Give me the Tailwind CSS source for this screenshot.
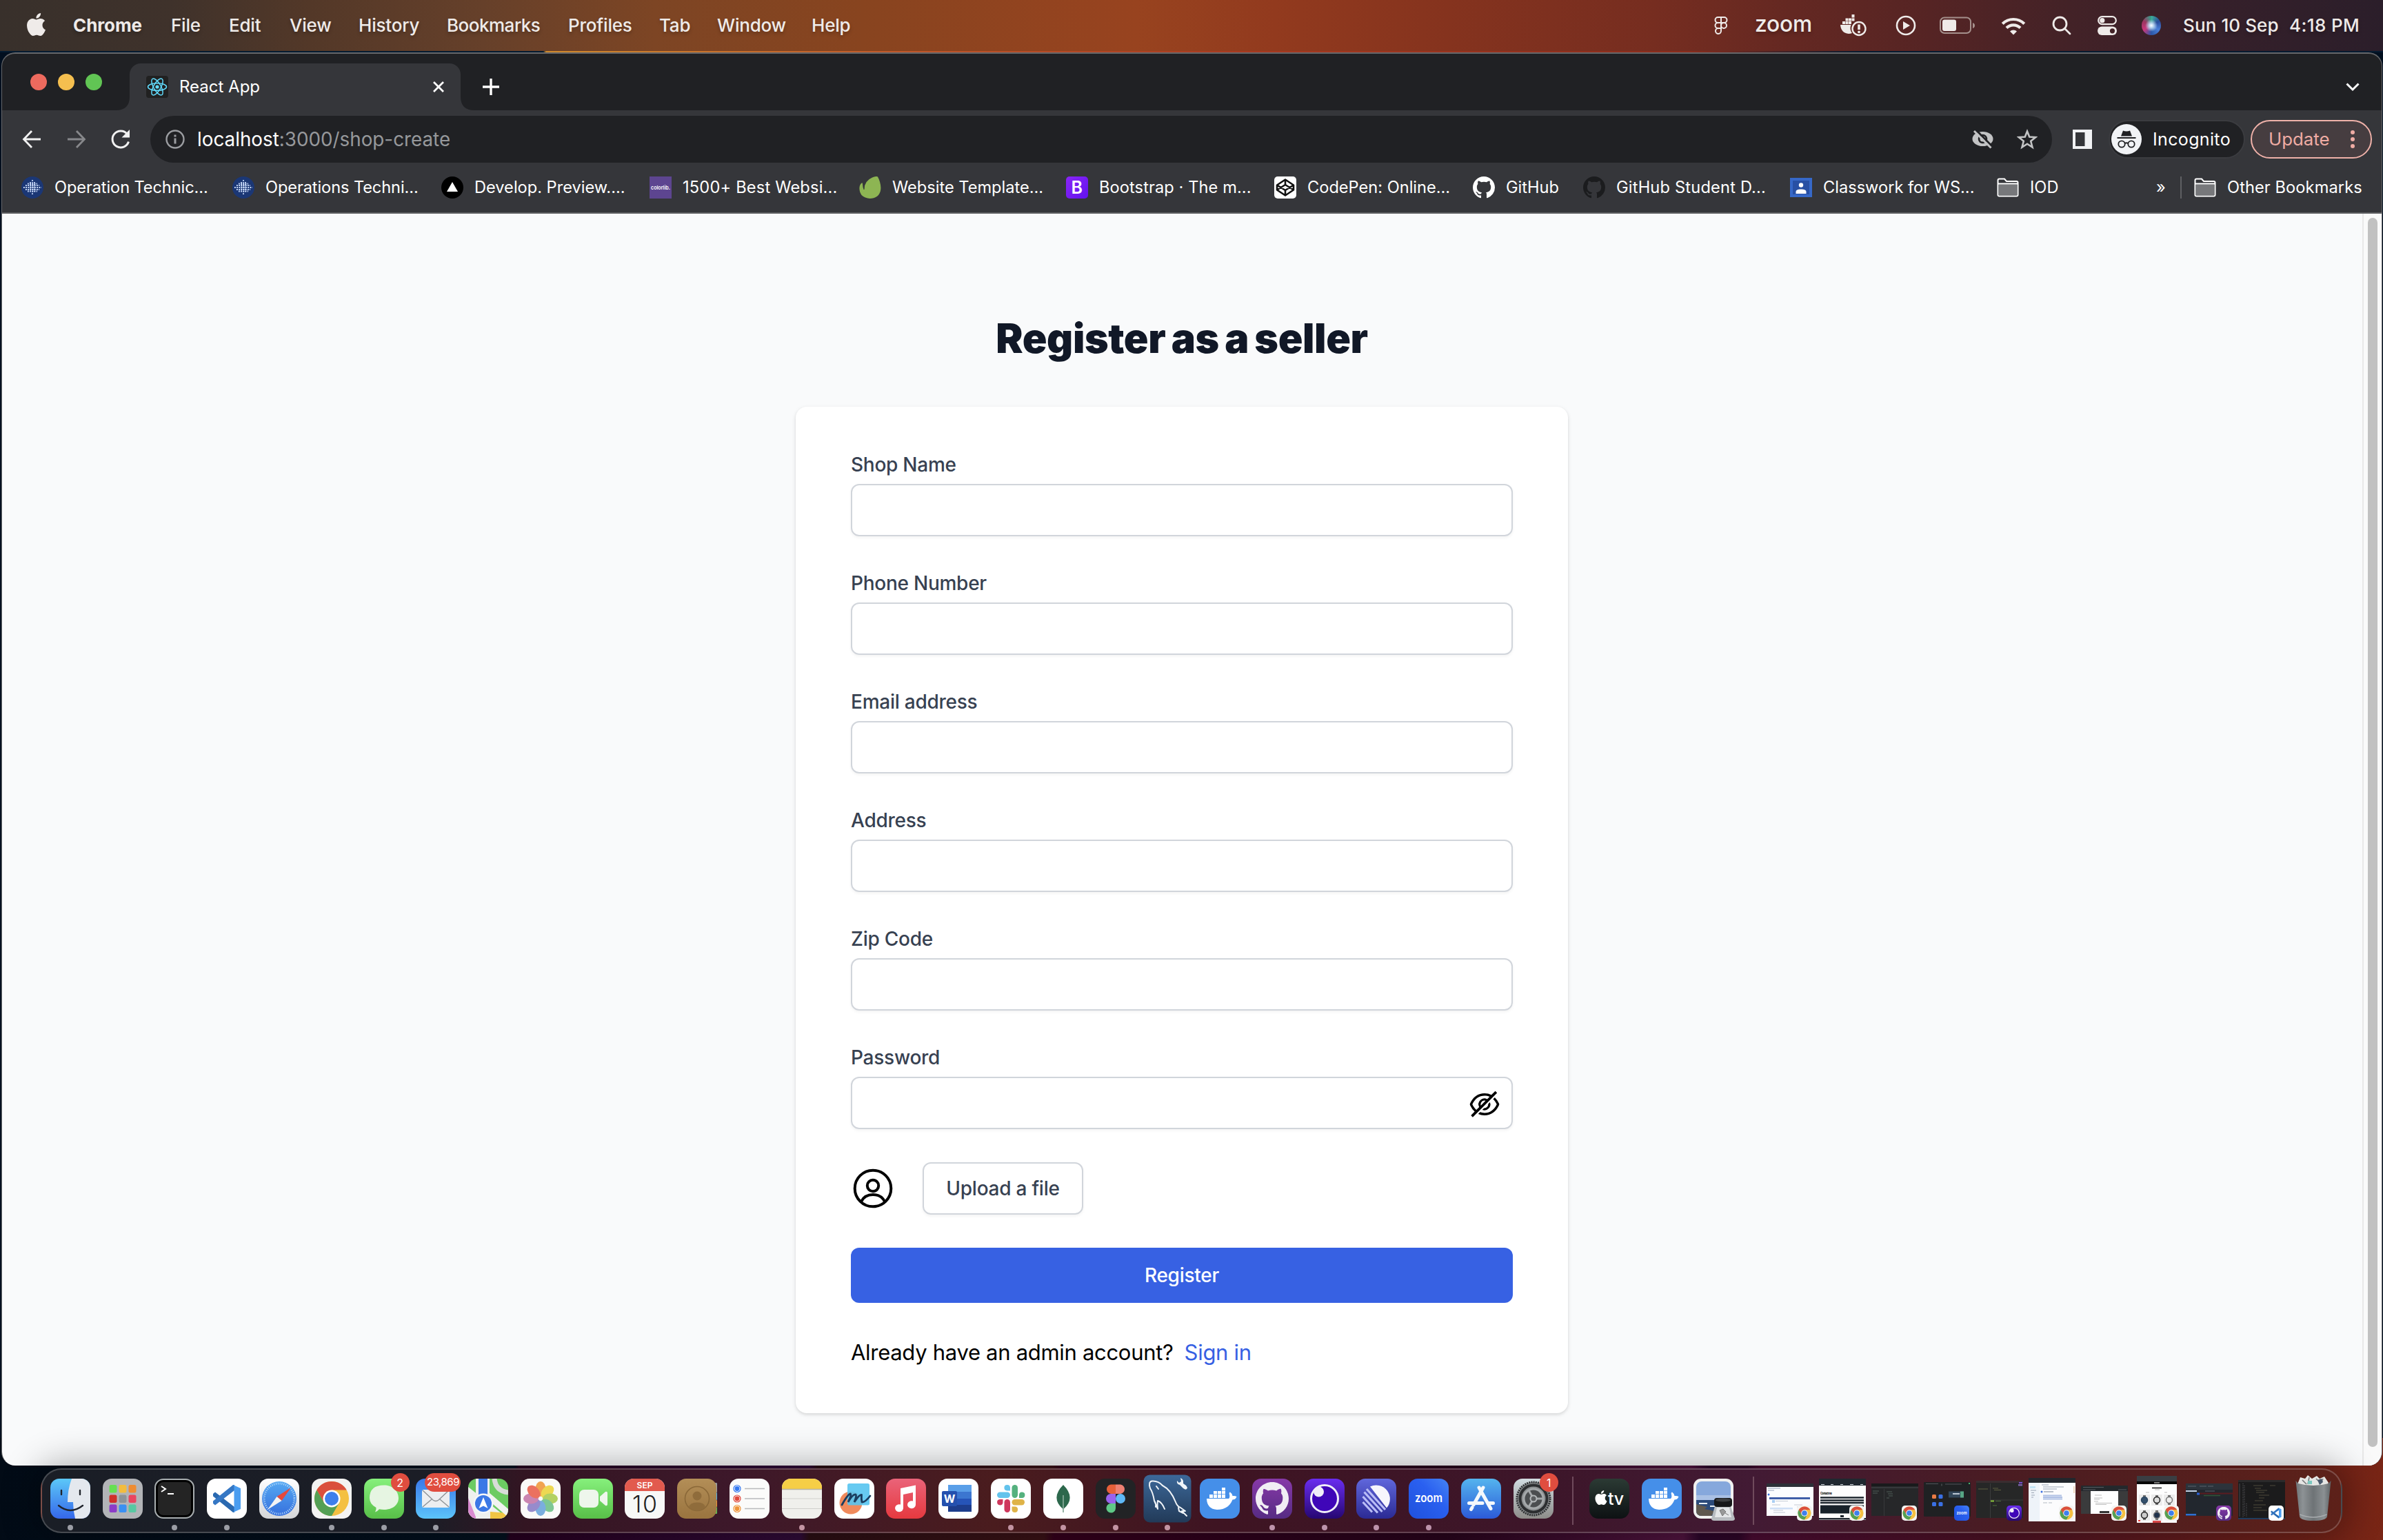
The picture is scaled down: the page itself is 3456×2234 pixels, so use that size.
<!DOCTYPE html>
<html lang="en">
<head>
<meta charset="utf-8">
<title>React App</title>
<script src="https://cdn.jsdelivr.net/npm/@tailwindcss/browser@4"></script>
</head>
<body class="w-[3456px] h-[2234px] overflow-hidden bg-[#020f1f] font-[Inter,sans-serif] flex flex-col">

<!-- Shared icon symbols -->
<svg width="0" height="0" class="absolute">
  <defs>
    <linearGradient id="gGreen" x1="0" y1="0" x2="0" y2="1"><stop offset="0" stop-color="#86f07c"/><stop offset="1" stop-color="#58bf48"/></linearGradient>
    <linearGradient id="gMail" x1="0" y1="0" x2="0" y2="1"><stop offset="0" stop-color="#3a78ea"/><stop offset="1" stop-color="#5cc4fa"/></linearGradient>
    <linearGradient id="gFind" x1="0" y1="0" x2="0" y2="1"><stop offset="0" stop-color="#5cc8f8"/><stop offset="1" stop-color="#3567ea"/></linearGradient>
    <linearGradient id="gWhite" x1="0" y1="0" x2="0" y2="1"><stop offset="0" stop-color="#ffffff"/><stop offset="1" stop-color="#d4d6d8"/></linearGradient>
    <linearGradient id="gSaf" x1="0" y1="0" x2="0" y2="1"><stop offset="0" stop-color="#55a8f2"/><stop offset="1" stop-color="#3670dd"/></linearGradient>
    <linearGradient id="gMusic" x1="0" y1="0" x2="0" y2="1"><stop offset="0" stop-color="#ea6379"/><stop offset="1" stop-color="#e6393f"/></linearGradient>
    <linearGradient id="gContact" x1="0" y1="0" x2="0" y2="1"><stop offset="0" stop-color="#b38e57"/><stop offset="1" stop-color="#9a743f"/></linearGradient>
    <linearGradient id="gSql" x1="0" y1="0" x2="0" y2="1"><stop offset="0" stop-color="#3c6899"/><stop offset="1" stop-color="#223a58"/></linearGradient>
    <linearGradient id="gGit" x1="0" y1="0" x2="0" y2="1"><stop offset="0" stop-color="#8739a8"/><stop offset="1" stop-color="#562b83"/></linearGradient>
    <linearGradient id="gIns" x1="0" y1="0" x2="0" y2="1"><stop offset="0" stop-color="#6a2df0"/><stop offset="1" stop-color="#260772"/></linearGradient>
    <linearGradient id="gLin" x1="0" y1="0" x2="0" y2="1"><stop offset="0" stop-color="#6067dc"/><stop offset="1" stop-color="#2b2a94"/></linearGradient>
    <linearGradient id="gZoom" x1="0" y1="1" x2="1" y2="0"><stop offset="0" stop-color="#1f51dc"/><stop offset=".6" stop-color="#2a60f0"/><stop offset="1" stop-color="#4583f4"/></linearGradient>
    <linearGradient id="gStore" x1="0" y1="0" x2="0" y2="1"><stop offset="0" stop-color="#54b4ee"/><stop offset="1" stop-color="#2c5ad8"/></linearGradient>
    <linearGradient id="gSet" x1="0" y1="0" x2="0" y2="1"><stop offset="0" stop-color="#d2dde2"/><stop offset="1" stop-color="#8d8c89"/></linearGradient>
    <linearGradient id="gTv" x1="0" y1="0" x2="0" y2="1"><stop offset="0" stop-color="#2b3a34"/><stop offset="1" stop-color="#0d1113"/></linearGradient>
    <linearGradient id="gTrash" x1="0" y1="0" x2="1" y2="0"><stop offset="0" stop-color="#6d7275"/><stop offset=".2" stop-color="#8d9295"/><stop offset=".5" stop-color="#6e7376"/><stop offset=".8" stop-color="#8b9093"/><stop offset="1" stop-color="#5d6265"/></linearGradient>
    <linearGradient id="gBoot" x1="0" y1="0" x2="1" y2="1"><stop offset="0" stop-color="#8a25f5"/><stop offset="1" stop-color="#6212f0"/></linearGradient>
    <clipPath id="sq"><rect width="58" height="58" rx="13"/></clipPath>

    <symbol id="github" viewBox="0 0 16 16"><path d="M8 0C3.58 0 0 3.58 0 8c0 3.54 2.29 6.53 5.47 7.59.4.07.55-.17.55-.38 0-.19-.01-.82-.01-1.49-2.01.37-2.53-.49-2.69-.94-.09-.23-.48-.94-.82-1.13-.28-.15-.68-.52-.01-.53.63-.01 1.08.58 1.23.82.72 1.21 1.87.87 2.33.66.07-.52.28-.87.51-1.07-1.78-.2-3.64-.89-3.64-3.95 0-.87.31-1.59.82-2.15-.08-.2-.36-1.02.08-2.12 0 0 .67-.21 2.2.82.64-.18 1.32-.27 2-.27s1.36.09 2 .27c1.53-1.04 2.2-.82 2.2-.82.44 1.1.16 1.92.08 2.12.51.56.82 1.27.82 2.15 0 3.07-1.87 3.75-3.65 3.95.29.25.54.73.54 1.48 0 1.07-.01 1.93-.01 2.2 0 .21.15.46.55.38A8.01 8.01 0 0 0 16 8c0-4.42-3.58-8-8-8z"/></symbol>
    <symbol id="apple" viewBox="0 0 24 24"><path d="M12.152 6.896c-.948 0-2.415-1.078-3.96-1.04-2.04.027-3.91 1.183-4.961 3.014-2.117 3.675-.546 9.103 1.519 12.09 1.013 1.454 2.208 3.09 3.792 3.039 1.52-.065 2.09-.987 3.935-.987 1.831 0 2.35.987 3.96.948 1.637-.026 2.676-1.48 3.676-2.948 1.156-1.688 1.636-3.325 1.662-3.415-.039-.013-3.182-1.221-3.22-4.857-.026-3.04 2.48-4.494 2.597-4.559-1.429-2.09-3.623-2.324-4.39-2.376-2-.156-3.675 1.09-4.61 1.09zM15.53 3.83c.843-1.012 1.4-2.427 1.245-3.83-1.207.052-2.662.805-3.532 1.818-.78.896-1.454 2.338-1.273 3.714 1.338.104 2.715-.688 3.559-1.701"/></symbol>
    <symbol id="folder" viewBox="0 0 32 28"><path d="M1.5 25.500V3.500Q1.500 1.500 3.500 1.500H11L14 5H28.500Q30.500 5 30.500 7V24.500Q30.500 26.500 28.500 26.500H3.500Q1.500 26.500 1.500 24.500Z" fill="#35363a" stroke="#fff" stroke-width="2"/><path d="M2.500 9.500H29.500V25.500H2.500Z" fill="#77787b"/><path d="M2 8.500H30" stroke="#fff" stroke-width="2"/></symbol>
    <symbol id="dotglobe" viewBox="0 0 32 32"><circle cx="16" cy="16" r="16" fill="#1b3775"/><g stroke="#cfe0ff" stroke-width="1.800" stroke-dasharray="1.800 1.400"><path d="M3 16H29M6 13H26M6 19H26M9 10.500H23M9 21.500H23M16 5V27M13 8V24M19 8V24"/></g></symbol>

    <symbol id="chrome" viewBox="0 0 58 58"><rect width="58" height="58" rx="13" fill="#f3f3f2"/><circle cx="29" cy="29" r="25" fill="#f4c042"/><path d="M29 29 7.350 16.500A25 25 0 0 1 50.650 16.500L29 16.500Z" fill="#da4f3d"/><path d="M7.350 16.500 18.200 35.300 29 29V16.500Z" fill="#da4f3d"/><path d="M7.350 16.500A25 25 0 0 0 29 54L39.800 35.250 29 41.500 18.200 35.250Z" fill="#54a055"/><circle cx="29" cy="29" r="12.500" fill="#fff"/><circle cx="29" cy="29" r="10" fill="#3e7fec"/></symbol>
    <symbol id="vscode" viewBox="0 0 58 58"><rect width="58" height="58" rx="13" fill="#fff"/><path d="M9 22 12 19.500 40 41V49L38 49 9 25.500Z" fill="#2a69b0"/><path d="M9 36 12 38.500 40 17V9H38L9 32.500Z" fill="#3577c4"/><path d="M38 9 49 14V44L38 49 39.500 47V11Z" fill="#4a9df0"/></symbol>
    <symbol id="docker" viewBox="0 0 58 58"><rect width="58" height="58" rx="13" fill="#458fe9"/><g fill="#fff"><path d="M10 29H42Q44 27 43 23 42 20.500 44 19.500 47 21.500 47.500 25 51 24.500 53.500 26 52 30.500 47.500 30.500 42 45 25 45 10.500 44 10 29Z"/><path d="M14 23h5v5h-5zM20 23h5v5h-5zM26 23h5v5h-5zM32 23h5v5h-5zM20 18h5v4.300h-5zM26 18h5v4.300h-5zM32 18h5v4.300h-5zM32 13h5v4.300h-5z"/></g></symbol>
    <symbol id="ghapp" viewBox="0 0 58 58"><rect width="58" height="58" rx="13" fill="url(#gGit)"/><use href="#github" x="5" y="5" width="48" height="48" fill="#f1edf4"/></symbol>
    <symbol id="insomnia" viewBox="0 0 58 58"><rect width="58" height="58" rx="13" fill="url(#gIns)"/><circle cx="29" cy="29" r="19.500" fill="#3f06b8" stroke="#f0eef8" stroke-width="3"/><circle cx="20.500" cy="19" r="7.500" fill="#f0eef8"/></symbol>
    <symbol id="zoomapp" viewBox="0 0 58 58"><rect width="58" height="58" rx="13" fill="url(#gZoom)"/><text x="9" y="34" font-family="Inter" font-weight="600" font-size="17" fill="#fff" textLength="40" lengthAdjust="spacingAndGlyphs">zoom</text></symbol>
  </defs>
</svg>

<!-- Menu bar -->
<header class="h-[74px] w-full shrink-0 flex items-center text-[26px] text-[#efebe9] whitespace-nowrap font-medium tracking-[-0.2px] [text-shadow:0_3px_5px_rgba(0,0,0,.25)] bg-[linear-gradient(90deg,#38302b_0,#3f322b_250px,#533828_450px,#66402a_700px,#7d4524_950px,#88441f_1250px,#98431f_1650px,#923a1e_1850px,#85331e_2100px,#762d20_2400px,#642822_2600px,#552424_2800px,#432227_3000px,#36202a_3200px,#2b1e2a_3456px)]">
  <svg class="w-[33px] h-[33px] ml-[36px] mr-[37px] mb-[4px] fill-[#efebe9]"><use href="#apple"/></svg>
  <nav class="flex items-center -mt-px">
    <span class="w-[142px] font-bold tracking-[-0.1px]">Chrome</span>
    <span class="w-[84px]">File</span>
    <span class="w-[88px]">Edit</span>
    <span class="w-[100px]">View</span>
    <span class="w-[128px]">History</span>
    <span class="w-[176px] tracking-[-0.5px]">Bookmarks</span>
    <span class="w-[132px]">Profiles</span>
    <span class="w-[84px]">Tab</span>
    <span class="w-[137px]">Window</span>
    <span class="w-[60px]">Help</span>
  </nav>
  <div class="ml-auto flex items-center">
    <svg class="w-[20px] h-[28px] mr-[39px]" viewBox="0 0 20 28" fill="none" stroke="#efebe9" stroke-width="2"><path d="M10 2H5.500a4 4 0 0 0 0 8H10ZM10 2h4.500a4 4 0 0 1 0 8H10ZM10 10H5.500a4 4 0 0 0 0 8H10ZM10 18H5.500a4 4 0 1 0 4.500 4Z"/><circle cx="14" cy="14" r="4"/></svg>
    <svg class="w-[84px] h-[44px] mr-[40px] overflow-visible" viewBox="0 0 84 44"><text x="0" y="31" font-family="Inter" font-weight="500" font-size="33" fill="#efebe9" textLength="83" lengthAdjust="spacingAndGlyphs">zoom</text></svg>
    <svg class="w-[38px] h-[32px] mr-[42px]" viewBox="0 0 38 32" fill="#efebe9"><path d="M3 10h4v4H3zM7.500 10h4v4h-4zM12 10h4v4h-4zM7.500 5.500h4v4h-4zM12 5.500h4v4h-4zM16.500 5.500h4v4h-4zM16.500 0h4v4.500h-4zM0 15H15.500A12 12 0 0 0 17 27 16 16 0 0 1 12 28Q1 27 0 15Z"/><circle cx="27" cy="20.500" r="9.500" fill="none" stroke="#efebe9" stroke-width="2.400"/><path d="M25.200 14.500h3.600v7.500h-3.600z"/><circle cx="27" cy="25.300" r="1.900"/></svg>
    <svg class="w-[30px] h-[30px] mr-[34px]" viewBox="0 0 30 30"><circle cx="15" cy="15" r="13" fill="none" stroke="#efebe9" stroke-width="2.600"/><path d="M11 9V21L21 15Z" fill="#efebe9"/></svg>
    <svg class="w-[52px] h-[26px] mr-[37px]" viewBox="0 0 52 26"><rect x="1" y="1.500" width="44" height="22.500" rx="6" fill="none" stroke="#a5908c" stroke-width="2"/><rect x="4" y="4.500" width="20" height="16.500" rx="3" fill="#efebe9"/><path d="M48 9Q51 10 51 13T48 17Z" fill="#a5908c"/></svg>
    <svg class="w-[36px] h-[27px] mr-[38px]" viewBox="0 0 36 27"><g fill="none" stroke="#efebe9" stroke-width="4.200"><path d="M2.200 10.500A22.500 22.500 0 0 1 33.800 10.500"/><path d="M8 16.500A14 14 0 0 1 28 16.500"/></g><path d="M13 21.500A7 7 0 0 1 23 21.500L18 26.500Z" fill="#efebe9"/></svg>
    <svg class="w-[28px] h-[28px] mr-[38px]" viewBox="0 0 28 28" fill="none" stroke="#efebe9" stroke-width="2.800" stroke-linecap="round"><circle cx="11.500" cy="11.500" r="9.500"/><path d="M18.500 18.500 26 26"/></svg>
    <svg class="w-[28px] h-[28px] mr-[36px]" viewBox="0 0 28 28"><rect x="1.200" y="1.200" width="25.600" height="11" rx="5.500" fill="none" stroke="#efebe9" stroke-width="2.200"/><circle cx="6.800" cy="6.700" r="3.600" fill="#efebe9"/><rect y="15.500" width="28" height="12.500" rx="6.200" fill="#efebe9"/><circle cx="21.500" cy="21.800" r="3.600" fill="#432227"/></svg>
    <span class="w-[28px] h-[28px] rounded-full mr-[32px] bg-[radial-gradient(circle_at_50%_50%,#fff_0,#bcd8f0_15%,transparent_45%),conic-gradient(#3fae9a,#284a9a,#4a7fd8,#2b57a8,#c8387c,#9c3560,#2fa58c)]"></span>
    <span class="w-[154px] -mt-px tracking-[0.1px]">Sun 10 Sep</span>
    <span class="w-[136px] -mt-px tracking-[0.4px]">4:18 PM</span>
  </div>
</header>
<div class="h-[2px] shrink-0 bg-[linear-gradient(90deg,#031a30_0,#031a30_788px,#d08a2c_792px,#c0582a_1300px,#a83a20_1800px,#8a2c1c_2450px,#051a30_2700px)]"></div>

<!-- Browser window -->
<main class="w-[3453px] ml-[2px] h-[2050px] shrink-0 flex flex-col rounded-[20px] overflow-hidden bg-[#202124] border-x border-t-2 border-[#66676a] border-b-0">
  <!-- Tab strip -->
  <div class="h-[82px] shrink-0 flex items-end relative">
    <div class="flex gap-4 ml-[41px] self-center mb-[1px]">
      <span class="size-6 rounded-full bg-[#ed6a5e]"></span>
      <span class="size-6 rounded-full bg-[#f5bf4f]"></span>
      <span class="size-6 rounded-full bg-[#61c554]"></span>
    </div>
    <div class="flex items-end ml-[20px]">
      <svg class="size-5" viewBox="0 0 20 20"><path d="M20 0V20H0Q20 20 20 0Z" fill="#35363a"/></svg>
      <div class="w-[480px] h-[68px] rounded-t-2xl bg-[#35363a] flex items-center text-white text-[24px]">
        <svg class="size-8 ml-6" viewBox="0 0 32 32"><rect width="32" height="32" rx="4" fill="#212121"/><g fill="none" stroke="#61dafb" stroke-width="1.500"><ellipse cx="16" cy="16" rx="13.500" ry="5.200"/><ellipse cx="16" cy="16" rx="13.500" ry="5.200" transform="rotate(60 16 16)"/><ellipse cx="16" cy="16" rx="13.500" ry="5.200" transform="rotate(120 16 16)"/></g><circle cx="16" cy="16" r="2.600" fill="#61dafb"/></svg>
        <span class="ml-4">React App</span>
        <svg class="size-4 ml-auto mr-6" viewBox="0 0 16 16" stroke="#fff" stroke-width="2.800"><path d="M1 1 15 15M15 1 1 15"/></svg>
      </div>
      <svg class="size-5" viewBox="0 0 20 20"><path d="M0 0V20H20Q0 20 0 0Z" fill="#35363a"/></svg>
    </div>
    <svg class="size-6 ml-[12px] mb-[22px]" viewBox="0 0 24 24" stroke="#fff" stroke-width="3.400"><path d="M12 0V24M0 12H24"/></svg>
    <svg class="w-[20px] h-[13px] ml-auto mb-[27px] mr-[32px]" viewBox="0 0 20 13" fill="none" stroke="#fff" stroke-width="3"><path d="M1.500 1.500 10 10 18.500 1.500"/></svg>
  </div>

  <!-- Toolbar -->
  <div class="h-[84px] shrink-0 bg-[#35363a] flex items-center text-white">
    <svg class="size-7 ml-[29px]" viewBox="0 0 28 28" fill="none" stroke="#f1f1f1" stroke-width="2.800"><path d="M27 14H3M14 2 2.500 14 14 26"/></svg>
    <svg class="size-7 ml-[37px]" viewBox="0 0 28 28" fill="none" stroke="#87888b" stroke-width="2.800"><path d="M1 14H25M14 2 25.500 14 14 26"/></svg>
    <svg class="size-[30px] ml-[35px]" viewBox="0 0 30 30"><path d="M24.500 7.500A12 12 0 1 0 26.500 18.500" fill="none" stroke="#f1f1f1" stroke-width="3"/><path d="M28 1V12.500H16.500Z" fill="#f1f1f1"/></svg>
    <div class="w-[2758px] h-[68px] ml-[28px] rounded-full bg-[#202124] flex items-center text-[27.800px]">
      <svg class="size-[28px] ml-[22px]" viewBox="0 0 28 28" fill="none" stroke="#9b9da1"><circle cx="14" cy="14" r="12.500" stroke-width="2.400"/><path d="M14 12.500V20.500M14 7.500V10.500" stroke-width="3"/></svg>
      <span class="ml-[18px] mt-px whitespace-nowrap">localhost<span class="text-[#96989b]">:3000/shop-create</span></span>
      <svg class="w-[31px] h-[28px] ml-auto" viewBox="0 0 31 28"><ellipse cx="15.500" cy="13.500" rx="15" ry="10.500" fill="#c2c3c4"/><circle cx="15.500" cy="13.500" r="6.800" fill="#202124"/><circle cx="15.500" cy="13.500" r="4" fill="#c2c3c4"/><path d="M5 0 30 25" stroke="#202124" stroke-width="3"/><path d="M3 2 27.500 26.500" stroke="#c2c3c4" stroke-width="3"/></svg>
      <svg class="size-[30px] ml-[34px] mr-[21px]" viewBox="0 0 30 30" fill="none" stroke="#c2c3c4" stroke-width="2.600"><path d="M15 3.500 18.200 11.600 27 12.200 20.200 17.800 22.500 26.500 15 21.700 7.500 26.500 9.800 17.800 3 12.200 11.800 11.600Z"/></svg>
    </div>
    <svg class="size-7 ml-[30px]" viewBox="0 0 28 28"><rect width="28" height="28" fill="#f1f2f4"/><rect x="4" y="4" width="13.500" height="20" fill="#35363a"/></svg>
    <div class="w-[198px] h-[56px] ml-[24px] rounded-full bg-[#202124] border-2 border-[#3b3c40] flex items-center text-[25px]">
      <svg class="size-[44px] ml-[2px]" viewBox="0 0 44 44"><circle cx="22" cy="22" r="22" fill="#f1f3f6"/><path d="M14 17.500 17 9.500Q22 11.500 27 9.500L30 17.500Z" fill="#202124"/><path d="M8.500 20H35.500" stroke="#202124" stroke-width="2"/><g fill="none" stroke="#202124" stroke-width="1.800"><circle cx="15" cy="29" r="4.700"/><circle cx="29" cy="29" r="4.700"/><path d="M19.500 28Q22 26.500 24.500 28"/></g></svg>
      <span class="ml-[16px] mt-px tracking-[0.35px]">Incognito</span>
    </div>
    <div class="w-[176px] h-[56px] ml-[8px] rounded-full bg-[#463d40] border-2 border-[#efb1a9] flex items-center text-[25.800px] text-[#efaca4]">
      <span class="ml-[24px] mt-px">Update</span>
      <svg class="w-[6px] h-[28px] ml-auto mr-[23px] fill-[#efaca4]" viewBox="0 0 6 28"><circle cx="3" cy="4" r="3"/><circle cx="3" cy="14" r="3"/><circle cx="3" cy="24" r="3"/></svg>
    </div>
  </div>

  <!-- Bookmarks -->
  <div class="h-[66px] shrink-0 pb-[8px] bg-[#35363a] border-b-2 border-[#5f6063] flex items-center text-white text-[23.600px] whitespace-nowrap pl-[28px]">
    <div class="w-[306px] flex items-center gap-4 tracking-[-0.1px]"><svg class="size-8"><use href="#dotglobe"/></svg><span>Operation Technic...</span></div>
    <div class="w-[303px] flex items-center gap-4 tracking-[-0.1px]"><svg class="size-8"><use href="#dotglobe"/></svg><span>Operations Techni...</span></div>
    <div class="w-[302px] flex items-center gap-4"><svg class="size-8" viewBox="0 0 32 32"><circle cx="16" cy="16" r="16"/><path d="M16 8 24 22H8Z" fill="#fff"/></svg><span>Develop. Preview....</span></div>
    <div class="w-[304px] flex items-center gap-4"><svg class="size-8 overflow-visible" viewBox="0 0 32 32"><rect width="32" height="32" fill="#5d4590"/><text x="2" y="19" font-family="Inter" font-weight="600" font-size="8" fill="#fff" textLength="28" lengthAdjust="spacingAndGlyphs">colorlib.</text></svg><span class="tracking-[0.2px]">1500+ Best Websi...</span></div>
    <div class="w-[300px] flex items-center gap-4"><svg class="size-8" viewBox="0 0 32 32"><path d="M27 .5C31 8 34 20 28 27 21 34 9 33 3.500 27 0 22-1 14 3 10Q5 8 5 11 5 16 7 19 8 6 19 1.500 25-1 27 .5Z" fill="#8db553"/><path d="M7 19Q6 13 9 8" stroke="#35363a" fill="none"/></svg><span>Website Template...</span></div>
    <div class="w-[302px] flex items-center gap-4"><svg class="size-8" viewBox="0 0 32 32"><rect width="32" height="32" rx="5" fill="url(#gBoot)"/><text x="7.500" y="25" font-family="Inter" font-weight="600" font-size="25" fill="#fff">B</text></svg><span class="tracking-[0.1px]">Bootstrap · The m...</span></div>
    <div class="w-[288px] flex items-center gap-4"><svg class="size-8" viewBox="0 0 32 32"><rect width="32" height="32" rx="5" fill="#fff"/><g fill="none" stroke="#111" stroke-width="2.600" stroke-linejoin="round"><path d="M16 4.500 28 12.500V19.500L16 27.500 4 19.500V12.500ZM16 4.500V12M16 20V27.500M4 12.500 16 20 28 12.500M4 19.500 16 12 28 19.500"/></g></svg><span>CodePen: Online...</span></div>
    <div class="w-[160px] flex items-center gap-4"><svg class="size-8 fill-white"><use href="#github"/></svg><span>GitHub</span></div>
    <div class="w-[300px] flex items-center gap-4"><svg class="size-8 fill-[#1b1c1e]"><use href="#github"/></svg><span class="tracking-[0.2px]">GitHub Student D...</span></div>
    <div class="w-[300px] flex items-center gap-4"><svg class="w-8 h-7" viewBox="0 0 32 28"><rect width="32" height="28" fill="#3668c8"/><rect x="4" y="4" width="24" height="20" fill="#2850a4"/><circle cx="16" cy="10.500" r="3.200" fill="#fff"/><path d="M8.500 23V20Q8.500 16.500 16 16.500T23.500 20V23Z" fill="#fff"/></svg><span>Classwork for WS...</span></div>
    <div class="flex items-center gap-4"><svg class="w-8 h-7"><use href="#folder"/></svg><span>IOD</span></div>
    <div class="ml-auto flex items-center mr-[25px]">
      <span class="w-[35px]">»</span>
      <span class="w-[2px] h-8 bg-[#5f6063] mr-[18px]"></span>
      <svg class="w-8 h-7 mr-4"><use href="#folder"/></svg>
      <span class="w-[199px] tracking-[0.1px]">Other Bookmarks</span>
    </div>
  </div>

  <!-- Page -->
  <div class="flex-1 min-h-0 flex bg-[#f9fafb]">
    <div class="flex-1 flex flex-col items-center pt-[144px] pr-px">
      <h1 class="h-[72px] leading-[74px] text-[59px] font-black tracking-[-0.4px] [word-spacing:-3px] text-[#111827]">Register as a seller</h1>
      <form class="mt-16 w-[1120px] h-[1460px] rounded-2xl bg-white px-20 py-16 flex flex-col gap-12 shadow-[0_2px_6px_rgba(0,0,0,.1),0_2px_4px_rgba(0,0,0,.06)] text-[28px] leading-[40px] text-[#374151] font-medium tracking-[-0.25px]">
        <label class="flex flex-col gap-2">Shop Name<span class="h-[76px] rounded-xl border-2 border-[#d1d5db] shadow-[0_2px_4px_rgba(0,0,0,.05)]"></span></label>
        <label class="flex flex-col gap-2">Phone Number<span class="h-[76px] rounded-xl border-2 border-[#d1d5db] shadow-[0_2px_4px_rgba(0,0,0,.05)]"></span></label>
        <label class="flex flex-col gap-2">Email address<span class="h-[76px] rounded-xl border-2 border-[#d1d5db] shadow-[0_2px_4px_rgba(0,0,0,.05)]"></span></label>
        <label class="flex flex-col gap-2">Address<span class="h-[76px] rounded-xl border-2 border-[#d1d5db] shadow-[0_2px_4px_rgba(0,0,0,.05)]"></span></label>
        <label class="flex flex-col gap-2">Zip Code<span class="h-[76px] rounded-xl border-2 border-[#d1d5db] shadow-[0_2px_4px_rgba(0,0,0,.05)]"></span></label>
        <label class="flex flex-col gap-2">Password
          <span class="h-[76px] rounded-xl border-2 border-[#d1d5db] shadow-[0_2px_4px_rgba(0,0,0,.05)] flex items-center justify-end pr-[14px] pt-[4px]">
            <svg class="size-[50px] fill-black" viewBox="0 0 1024 1024"><path d="M942.2 486.2Q889.47 375.11 816.7 305l-50.88 50.88C807.31 395.53 843.45 447.4 874.7 512 791.5 684.2 673.4 766 512 766q-72.67 0-133.87-22.38L323 798.75Q408 838 512 838q288.3 0 430.2-300.3a60.29 60.29 0 0 0 0-51.5zm-63.57-320.64L836 122.88a8 8 0 0 0-11.32 0L715.31 232.2Q624.86 186 512 186q-288.3 0-430.2 300.3a60.3 60.3 0 0 0 0 51.5q56.69 119.4 136.5 191.41L112.48 835a8 8 0 0 0 0 11.31L155.17 889a8 8 0 0 0 11.31 0l712.15-712.12a8 8 0 0 0 0-11.32zM149.3 512C232.6 339.8 350.7 258 512 258c54.54 0 104.13 9.36 149.12 28.39l-70.3 70.3a176 176 0 0 0-238.13 238.13l-83.42 83.42C223.1 637.49 183.3 582.28 149.3 512zm246.7 0a112.11 112.11 0 0 1 146.2-106.69L401.31 546.2A112 112 0 0 1 396 512z"/><path d="M508 624c-3.46 0-6.87-.16-10.25-.47l-52.82 52.82a176.09 176.09 0 0 0 227.42-227.42l-52.82 52.82c.31 3.38.47 6.79.47 10.25a111.94 111.94 0 0 1-112 112z"/></svg>
          </span>
        </label>
        <div class="flex items-center gap-10">
          <svg class="size-16" viewBox="0 0 64 64" fill="none" stroke="#000" stroke-width="4"><circle cx="32" cy="32" r="26.300"/><circle cx="32" cy="28" r="8.200"/><path d="M15 51Q20 41 32 41T49 51"/></svg>
          <span class="w-[233px] h-[76px] rounded-xl border-2 border-[#d1d5db] shadow-[0_2px_4px_rgba(0,0,0,.05)] flex items-center justify-center">Upload a file</span>
        </div>
        <button type="button" class="h-20 rounded-xl bg-[#3761e3] text-white shrink-0">Register</button>
        <p class="flex gap-4 text-[31px] leading-[48px] font-normal text-black tracking-[-0.3px]"><span>Already have an admin account?</span><a class="text-[#3761e3]">Sign in</a></p>
      </form>
    </div>
    <div class="w-[28px] bg-[#fafafa] border-l-2 border-[#e8e8e8] flex justify-center pt-[6px]"><span class="w-[14px] h-[1783px] rounded-full bg-[#c1c1c1]"></span></div>
  </div>
</main>

<!-- Desktop strip with the dock -->
<footer class="flex-1 -mt-10 pt-[44px] -z-10 bg-[linear-gradient(97deg,#020b16_0,#03111f_745px,#26001f_752px,#300b38_1170px,#2b0f14_1182px,#3a1216_1520px,#34001c_1535px,#28041c_2100px,#50143f_2440px,#2b062a_2465px,#2e0628_2520px,#4a0c32_2540px,#4c1224_2900px,#7a2615_3456px)]"></footer>
<div class="absolute left-[59px] top-[2130px] w-[3338px] h-[94px] rounded-[30px] border-2 border-white/20 shadow-[0_0_50px_8px_rgba(0,0,0,.3)] flex items-start bg-[linear-gradient(90deg,#1a1e26_0,#1b1d26_560px,#331522_700px,#3d182a_1000px,#4a1c1e_1380px,#3e1422_1700px,#3d162a_2200px,#421a34_2480px,#4a1c22_2850px,#5d2119_3338px)]">
  <div class="flex ml-[3px] mt-[13px]">
    <div class="w-[75.790px] flex flex-col items-center"><svg class="size-[58px]" viewBox="0 0 58 58"><g clip-path="url(#sq)"><rect width="58" height="58" fill="url(#gFind)"/><path d="M31 0Q25 16 25 34H33Q33 46 36 58H58V0Z" fill="#e4e8ee"/><path d="M16 17v6M43 17v6M12 39Q29 53 47 39" stroke="#20242c" stroke-width="2.400" fill="none" stroke-linecap="round"/></g></svg><span class="mt-[9px] size-2 rounded-full bg-[#9b9da5]"></span></div>
    <div class="w-[75.790px] flex flex-col items-center"><svg class="size-[58px]" viewBox="0 0 58 58"><rect width="58" height="58" rx="13" fill="#b2b4b7"/><rect x="9.500" y="9" width="11" height="11.500" rx="2.500" fill="#66e052"/><rect x="23.500" y="9" width="11" height="11.500" rx="2.500" fill="#f2bc3e"/><rect x="37.500" y="9" width="11" height="11.500" rx="2.500" fill="#ee8c32"/><rect x="9.500" y="23.500" width="11" height="11.500" rx="2.500" fill="#d0302a"/><rect x="23.500" y="23.500" width="11" height="11.500" rx="2.500" fill="#8d9398"/><rect x="37.500" y="23.500" width="11" height="11.500" rx="2.500" fill="#ea4560"/><rect x="9.500" y="37.500" width="11" height="11.500" rx="2.500" fill="#8c3cc8"/><rect x="23.500" y="37.500" width="11" height="11.500" rx="2.500" fill="#3a90f2"/><rect x="37.500" y="37.500" width="11" height="11.500" rx="2.500" fill="#58c8a2"/></svg></div>
    <div class="w-[75.790px] flex flex-col items-center"><svg class="size-[58px]" viewBox="0 0 58 58"><rect x="1" y="1" width="56" height="56" rx="12" fill="#000" stroke="#a8aeb0" stroke-width="2"/><rect x="5" y="5" width="48" height="48" rx="8" fill="#242424"/><path d="M10 11 16 15 10 19" fill="none" stroke="#fff" stroke-width="2"/><path d="M19 22h9" stroke="#fff" stroke-width="2"/></svg><span class="mt-[9px] size-2 rounded-full bg-[#9b9da5]"></span></div>
    <div class="w-[75.790px] flex flex-col items-center"><svg class="size-[58px]"><use href="#vscode"/></svg><span class="mt-[9px] size-2 rounded-full bg-[#9b9da5]"></span></div>
    <div class="w-[75.790px] flex flex-col items-center"><svg class="size-[58px]" viewBox="0 0 58 58"><rect width="58" height="58" rx="13" fill="url(#gWhite)"/><circle cx="29" cy="29" r="25" fill="url(#gSaf)"/><circle cx="29" cy="29" r="22" fill="none" stroke="#b9dcfb" stroke-width="3" stroke-dasharray="1 1.880"/><path d="M46 13 32.500 32 25.500 26Z" fill="#e5493d"/><path d="M12 45 25.500 26 32.500 32Z" fill="#f4f4f4"/></svg></div>
    <div class="w-[75.790px] flex flex-col items-center"><svg class="size-[58px]"><use href="#chrome"/></svg><span class="mt-[9px] size-2 rounded-full bg-[#9b9da5]"></span></div>
    <div class="w-[75.790px] flex flex-col items-center relative"><svg class="size-[58px]" viewBox="0 0 58 58"><rect width="58" height="58" rx="13" fill="url(#gGreen)"/><path d="M29 9.500C40 9.500 50 17 50 28S40 45 29 45Q25 45 22 44.300 20 47 16 48.500 18 45 17.500 42 8 37 8 28 8 9.500 29 9.500Z" fill="#e6f5e2"/></svg><span class="absolute left-[48px] -top-[12px] w-[27px] h-[27px] rounded-full bg-[#e04d3f] text-white text-[16px] flex items-center justify-center translate-y-1">2</span><span class="mt-[9px] size-2 rounded-full bg-[#9b9da5]"></span></div>
    <div class="w-[75.790px] flex flex-col items-center relative"><svg class="size-[58px]" viewBox="0 0 58 58"><rect width="58" height="58" rx="13" fill="url(#gMail)"/><rect x="9" y="16" width="40" height="26" rx="2.500" fill="#eceef0"/><path d="M10 17 25 31Q29 34 33 31L48 17M10 41 23 30M48 41 35 30" fill="none" stroke="#8d9296" stroke-width="1.400"/></svg><span class="absolute left-[22px] -top-[8px] w-[52px] h-[27px] rounded-full bg-[#e04d3f] text-white text-[15px] tracking-[-0.500px] flex items-center justify-center">23,869</span><span class="mt-[9px] size-2 rounded-full bg-[#9b9da5]"></span></div>
    <div class="w-[75.790px] flex flex-col items-center"><svg class="size-[58px]" viewBox="0 0 58 58"><g clip-path="url(#sq)"><rect width="58" height="58" fill="#6ccb62"/><path d="M0 58V22L26 58Z" fill="#d98bd0"/><path d="M0 12 58 58H0Z" fill="#eef0ee"/><path d="M0 28 12 58H0Z" fill="#d98bd0"/><path d="M32 58V48L58 50V58Z" fill="#f0c544"/><path d="M30 20 58 44V56L28 30Z" fill="#f1f2f1"/><path d="M38 0Q40 18 58 20" stroke="#d8dcd8" stroke-width="7" fill="none"/><rect x="11" width="20" height="58" fill="#eef0ee"/><rect x="15" width="13" height="34" fill="#3b78e6"/><circle cx="22" cy="36" r="14.500" fill="#f4f6f8"/><circle cx="22" cy="36" r="12" fill="#3b78e6"/><path d="M22 27 28.500 43 22 39.500 15.500 43Z" fill="#fff"/></g></svg></div>
    <div class="w-[75.790px] flex flex-col items-center"><svg class="size-[58px]" viewBox="0 0 58 58"><rect width="58" height="58" rx="13" fill="#fafaf8"/><g opacity=".88"><ellipse cx="29" cy="15" rx="7.500" ry="11" fill="#f0983a"/><ellipse cx="29" cy="15" rx="7.500" ry="11" fill="#ecd43c" transform="rotate(45 29 29)"/><ellipse cx="29" cy="15" rx="7.500" ry="11" fill="#a9cc50" transform="rotate(90 29 29)"/><ellipse cx="29" cy="15" rx="7.500" ry="11" fill="#6ec088" transform="rotate(135 29 29)"/><ellipse cx="29" cy="15" rx="7.500" ry="11" fill="#69a4dc" transform="rotate(180 29 29)"/><ellipse cx="29" cy="15" rx="7.500" ry="11" fill="#8a7cc6" transform="rotate(225 29 29)"/><ellipse cx="29" cy="15" rx="7.500" ry="11" fill="#c476a8" transform="rotate(270 29 29)"/><ellipse cx="29" cy="15" rx="7.500" ry="11" fill="#ea5f4a" transform="rotate(315 29 29)"/></g></svg></div>
    <div class="w-[75.790px] flex flex-col items-center"><svg class="size-[58px]" viewBox="0 0 58 58"><rect width="58" height="58" rx="13" fill="url(#gGreen)"/><rect x="9" y="16" width="28" height="26" rx="7" fill="#eef6ec"/><path d="M39 26 47 19Q50 18 50 21V37Q50 40 47 39L39 32Z" fill="#eef6ec"/></svg></div>
    <div class="w-[75.790px] flex flex-col items-center"><svg class="size-[58px]" viewBox="0 0 58 58"><g clip-path="url(#sq)"><rect width="58" height="58" fill="#f8f8f7"/><rect width="58" height="18" fill="#e25a4e"/></g><text x="29" y="14" text-anchor="middle" font-family="Inter" font-weight="600" font-size="12" fill="#fff" textLength="23">SEP</text><text x="29" y="49" text-anchor="middle" font-family="Inter" font-weight="300" font-size="34" fill="#222" textLength="36">10</text></svg></div>
    <div class="w-[75.790px] flex flex-col items-center"><svg class="size-[58px]" viewBox="0 0 58 58"><rect x="50" y="6" width="9" height="14" rx="3" fill="#9aa0a4"/><rect x="50" y="20" width="9" height="11" rx="3" fill="#4fb0e8"/><rect x="50" y="31" width="9" height="10" rx="3" fill="#ee9338"/><rect x="50" y="41" width="9" height="10" rx="3" fill="#5dbb55"/><rect width="57" height="58" rx="13" fill="url(#gContact)"/><circle cx="29" cy="29" r="17.500" fill="none" stroke="#8a6838" stroke-width="1.600"/><circle cx="29" cy="25" r="6.500" fill="#8f6c3b"/><path d="M17 42Q18 34.500 29 34.500T41 42Q29 51 17 42Z" fill="#8f6c3b"/></svg></div>
    <div class="w-[75.790px] flex flex-col items-center"><svg class="size-[58px]" viewBox="0 0 58 58"><rect width="58" height="58" rx="13" fill="#fbfbfa"/><path d="M22 14.500H51M22 29H51M22 43.500H51" stroke="#b9babc" stroke-width="1.500"/><g stroke-width="1.200"><circle cx="11" cy="14.500" r="5" fill="#fff" stroke="#3478f0"/><circle cx="11" cy="14.500" r="3.400" fill="#3478f0"/><circle cx="11" cy="29" r="5" fill="#fff" stroke="#e0493c"/><circle cx="11" cy="29" r="3.400" fill="#e0493c"/><circle cx="11" cy="43.500" r="5" fill="#fff" stroke="#ee9338"/><circle cx="11" cy="43.500" r="3.400" fill="#ee9338"/></g></svg></div>
    <div class="w-[75.790px] flex flex-col items-center"><svg class="size-[58px]" viewBox="0 0 58 58"><g clip-path="url(#sq)"><rect width="58" height="58" fill="#f0f0ec"/><rect width="58" height="15" fill="#f6ce46"/><path d="M0 15.500H58" stroke="#b9b4a4" stroke-width="1.500"/><path d="M0 29H58M0 43.500H58" stroke="#d0d0cc" stroke-width="1.200"/></g></svg><span class="mt-[9px] size-2 rounded-full bg-[#c294a2]"></span></div>
    <div class="w-[75.790px] flex flex-col items-center"><svg class="size-[58px]" viewBox="0 0 58 58"><rect width="58" height="58" rx="13" fill="#fff"/><circle cx="24" cy="35" r="16.500" fill="#f08a5c"/><rect x="19" y="7" width="32" height="31.500" rx="2.500" fill="#56c4f0" opacity=".9"/><path d="M11 38Q20 22 23.500 22 25 24 20 34 27 22 31 23 33 24 29 34 37 22 39.500 23.500 39 30 40 34 44 35 52 25" fill="none" stroke="#1a3d60" stroke-width="2.800" stroke-linecap="round"/></svg></div>
    <div class="w-[75.790px] flex flex-col items-center"><svg class="size-[58px]" viewBox="0 0 58 58"><rect width="58" height="58" rx="13" fill="url(#gMusic)"/><path d="M21 14 43 9.500V37.500A6 5.500 0 1 1 39 32.500V20L25 23V42A6 5.500 0 1 1 21 37.500Z" fill="#fff"/></svg></div>
    <div class="w-[75.790px] flex flex-col items-center"><svg class="size-[58px]" viewBox="0 0 58 58"><rect width="58" height="58" rx="13" fill="#fff"/><rect x="14" y="9" width="34" height="11" fill="#5a9fe8"/><rect x="14" y="19" width="34" height="10" fill="#3c76d0"/><rect x="14" y="29" width="34" height="9" fill="#2654b8"/><rect x="14" y="38" width="34" height="10" fill="#1d3d8c"/><rect x="5" y="18" width="22" height="22" rx="2" fill="#2450ae"/><text x="16" y="35" text-anchor="middle" font-family="Inter" font-weight="700" font-size="16" fill="#fff">W</text></svg></div>
    <div class="w-[75.790px] flex flex-col items-center"><svg class="size-[58px]" viewBox="0 0 58 58"><rect width="58" height="58" rx="13" fill="#fff"/><g fill="#63c3ec"><rect x="9" y="19.500" width="19" height="8.500" rx="4.200"/><path d="M28 17.500H23.500A4.300 4.300 0 1 1 28 13.200Z"/></g><g fill="#55b17e"><rect x="30.500" y="9" width="8.500" height="19" rx="4.200"/><path d="M41 28V23.500A4.200 4.200 0 1 1 45 28Z"/></g><g fill="#dfb347"><rect x="30.500" y="30" width="18.500" height="8.500" rx="4.200"/><path d="M30.500 40.500H35A4.300 4.300 0 1 1 30.500 45Z"/></g><g fill="#cf375c"><rect x="19.500" y="30" width="8.500" height="19" rx="4.200"/><path d="M17.500 30V34.500A4.200 4.200 0 1 1 13 30Z"/></g></svg><span class="mt-[9px] size-2 rounded-full bg-[#c294a2]"></span></div>
    <div class="w-[75.790px] flex flex-col items-center"><svg class="size-[58px]" viewBox="0 0 58 58"><rect width="58" height="58" rx="13" fill="#fff"/><path d="M29 9Q48 28 29.500 44V49H28.500V44Q10 28 29 9Z" fill="#2d684c"/><path d="M29 24V44" stroke="#c8d8cf" stroke-width="1"/></svg><span class="mt-[9px] size-2 rounded-full bg-[#c294a2]"></span></div>
    <div class="w-[75.790px] flex flex-col items-center"><svg class="size-[58px]" viewBox="0 0 58 58"><rect width="58" height="58" rx="13" fill="#222325"/><path d="M29 8.500H22A6.800 6.800 0 0 0 22 22H29Z" fill="#e6603a"/><path d="M29 8.500H36A6.800 6.800 0 0 1 36 22H29Z" fill="#ee8072"/><path d="M29 22H22A6.800 6.800 0 0 0 22 36H29Z" fill="#9a62ee"/><circle cx="36" cy="29" r="7" fill="#5fb8f6"/><path d="M29 36H22A6.800 6.800 0 1 0 29 43Z" fill="#5fc987"/></svg><span class="mt-[9px] size-2 rounded-full bg-[#c294a2]"></span></div>
    <div class="w-[75.790px] h-[75px] flex flex-col items-center"><svg class="size-[70px] -mt-[6px]" viewBox="0 0 70 70"><rect x=".5" y=".5" width="69" height="69" rx="9" fill="url(#gSql)"/><g fill="none" stroke="#f0f4f8" stroke-width="2" stroke-linecap="round" stroke-linejoin="round"><path d="M16 38Q14 26 10 20 7 10 13 9.500 22 9 28 16 40 22 47 40 49 46 54 48 58 51 61 53L56 53Q60 57 63 60M51 48 52 53 58 56M16 38Q19 45 21 50 20 44 21 38 27 40 31 50M16 38Q19 42 18 47"/><path d="M19 17 22 21"/></g><path d="M49 9Q48 14 53 15L58 20Q63 24 64 19 62 15 58 13 59 7 54 5L55 10 52 12Z" fill="#f0f4f8"/></svg><span class="mt-[3px] size-2 shrink-0 rounded-full bg-[#c294a2]"></span></div>
    <div class="w-[75.790px] flex flex-col items-center"><svg class="size-[58px]"><use href="#docker"/></svg></div>
    <div class="w-[75.790px] flex flex-col items-center"><svg class="size-[58px]"><use href="#ghapp"/></svg><span class="mt-[9px] size-2 rounded-full bg-[#bd93ab]"></span></div>
    <div class="w-[75.790px] flex flex-col items-center"><svg class="size-[58px]"><use href="#insomnia"/></svg><span class="mt-[9px] size-2 rounded-full bg-[#bd93ab]"></span></div>
    <div class="w-[75.790px] flex flex-col items-center"><svg class="size-[58px]" viewBox="0 0 58 58"><rect width="58" height="58" rx="13" fill="url(#gLin)"/><path d="M20 11.500A20 20 0 0 1 44 42.500Z" fill="#f6f6fc"/><path d="M15 15 42 45M11.500 19.500 37.500 48M9.500 26 31 49.500M9.500 34 23 48.500" stroke="#b9bdf6" stroke-width="3.200"/></svg><span class="mt-[9px] size-2 rounded-full bg-[#bd93ab]"></span></div>
    <div class="w-[75.790px] flex flex-col items-center"><svg class="size-[58px]"><use href="#zoomapp"/></svg><span class="mt-[9px] size-2 rounded-full bg-[#bd93ab]"></span></div>
    <div class="w-[75.790px] flex flex-col items-center"><svg class="size-[58px]" viewBox="0 0 58 58"><rect width="58" height="58" rx="13" fill="url(#gStore)"/><g stroke="#f4f8fc" stroke-width="5" stroke-linecap="round" fill="none"><path d="M26 13 43 43.500M32 13 18 38M11.500 35.500H31M40 35.500H46.500M16 42 14.500 44.500"/></g></svg></div>
    <div class="w-[75.790px] flex flex-col items-center relative"><svg class="size-[58px]" viewBox="0 0 58 58"><rect width="58" height="58" rx="13" fill="url(#gSet)"/><circle cx="29" cy="29" r="24" fill="#8b8e90" stroke="#2f3133" stroke-width="3" stroke-dasharray="2 1.200"/><circle cx="29" cy="29" r="19.500" fill="none" stroke="#2c2e30" stroke-width="4"/><circle cx="29" cy="29" r="14" fill="#4b4e50" stroke="#a4a8aa" stroke-width="3"/><path d="M29 29 43 29M29 29 22 17M29 29 22 41" stroke="#a4a8aa" stroke-width="3"/><circle cx="29" cy="29" r="4.500" fill="#5b5e60" stroke="#b4b8ba" stroke-width="2"/></svg><span class="absolute left-[47px] -top-[8px] w-[27px] h-[27px] rounded-full bg-[#e04d3f] text-white text-[16px] flex items-center justify-center">1</span></div>
  </div>
  <span class="w-[2px] h-[70px] bg-[#6f4a5c] mt-[10px] ml-[18px]"></span>
  <div class="flex ml-[14px] mt-[13px]">
    <div class="w-[76px] flex justify-center"><svg class="size-[58px]" viewBox="0 0 58 58"><rect width="58" height="58" rx="13" fill="url(#gTv)"/><use href="#apple" x="6.500" y="17" width="21" height="21" fill="#fff"/><text x="27" y="38" font-family="Inter" font-weight="500" font-size="25" fill="#fff" textLength="23">tv</text></svg></div>
    <div class="w-[76px] flex justify-center"><svg class="size-[58px]"><use href="#docker"/></svg></div>
    <div class="w-[76px] flex justify-center"><svg class="w-[60px] h-[62px]" viewBox="0 0 60 62"><rect width="58" height="58" rx="11" fill="#f1f1f0"/><rect x="4" y="4" width="50" height="50" rx="8" fill="#86a8dc"/><rect x="4" y="24" width="50" height="8" fill="#a9c0e4"/><path d="M4 31H54V46Q54 54 46 54H12Q4 54 4 46Z" fill="#2b4a7a"/><path d="M4 37 20 41 16 44 30 47 26 54H12Q4 54 4 46Z" fill="#5f584f"/><path d="M8 36h12M24 40h8" stroke="#e8eef4" stroke-width="2"/><path d="M31 40H54L60 58Q60 61 56 61H30Q26 61 26 58Z" fill="#b8bcc0"/><path d="M34 42H52L55 56H31Z" fill="#e4e6e8"/><path d="M38 46l5-2 4 4-5 6zM46 50l5 3" stroke="#777" fill="#999"/><rect x="30" y="28" width="26" height="13" rx="4" fill="#17181a"/><ellipse cx="43" cy="31" rx="11" ry="2.500" fill="#3c3e40"/></svg></div>
  </div>
  <span class="w-[2px] h-[70px] bg-[#6f4a5c] mt-[10px] ml-[18px]"></span>
  <!-- Minimised windows -->
  <div class="flex items-center h-[86px] ml-[18px] gap-2">
    <div class="relative w-[68px] h-[86px] flex items-center"><svg class="w-[68px] h-[47px]" viewBox="0 0 68 47"><rect width="68" height="47" fill="#fbfcfe"/><rect width="68" height="5" fill="#2c3038"/><path d="M2 7h18M2 10h9" stroke="#98a4bc" stroke-width="1.200"/><circle cx="3" cy="16" r="1.500" fill="#3b6fe0"/><rect x="4" y="20" width="59" height="3" fill="#3f5ea8"/><path d="M13 25.500h18M8 31h12M10 36h16M10 39h14M10 42h17M40 31h12M44 34h6" stroke="#c4cad4" stroke-width="1"/><rect x="8" y="24" width="4" height="4" fill="#a8cdf2"/><rect x="5" y="35" width="33" height="2.500" fill="#cfdff5"/></svg><svg class="absolute right-[2px] top-[52px] size-[22px]"><use href="#chrome"/></svg></div>
    <div class="relative w-[68px] h-[86px] flex items-center"><svg class="w-[68px] h-[60px]" viewBox="0 0 68 60"><rect width="68" height="60" fill="#fdfdfd"/><rect width="68" height="10" fill="#202830"/><path d="M3 8.500h5M17 8.500h4M31 8.500h4M45 8.500h5M60 8.500h4" stroke="#d5dae0" stroke-width="1"/><text x="2" y="23" font-family="Inter" font-weight="700" font-size="4.200" fill="#111" textLength="17">Contact me</text><path d="M2 27.500h63M2 31.500h63M2 35h63" stroke="#1b242c" stroke-width="2.400"/><rect x="2" y="38.500" width="63" height="12" fill="#18222a"/><rect x="31" y="53" width="5" height="3" fill="#18222a"/><rect y="57" width="68" height="2.500" fill="#202830"/></svg><svg class="absolute right-[2px] top-[52px] size-[22px]"><use href="#chrome"/></svg></div>
    <div class="relative w-[68px] h-[86px] flex items-center"><svg class="w-[68px] h-[47px]" viewBox="0 0 68 47"><rect width="68" height="47" fill="#262729"/><rect width="68" height="4" fill="#191a1c"/><path d="M0 6h68" stroke="#3c3f42" stroke-width="1.500"/><path d="M18.500 8v39" stroke="#38393b"/><path d="M22 12h8M24 15h7M25 18h6M22 21h4M2 11h9M2 14h7" stroke="#4e5e58" stroke-width="1"/></svg><svg class="absolute right-[2px] top-[52px] size-[22px]"><use href="#chrome"/></svg></div>
    <div class="relative w-[68px] h-[86px] flex items-center"><svg class="w-[68px] h-[50px]" viewBox="0 0 68 50"><rect width="68" height="50" rx="1" fill="#1f2123"/><path d="M3 2.500h18M26 2.500v3M31 3h24" stroke="#50555a" stroke-width="1.200"/><rect x="65" y="1" width="2" height="2" fill="#4ab870"/><rect x="12" y="18" width="6" height="6" rx="1.500" fill="#e87a44"/><rect x="21.500" y="18" width="6" height="6" rx="1.500" fill="#3a70e4"/><rect x="12" y="29" width="6" height="6" rx="1.500" fill="#3a70e4"/><rect x="21.500" y="29" width="6" height="6" rx="1.500" fill="#3a70e4"/><rect x="36" y="13.500" width="22" height="9" fill="#33475a"/><path d="M42 17h10" stroke="#dfe8f0" stroke-width="1.600"/><rect x="53" y="13.500" width="5" height="9" fill="#57a684"/></svg><svg class="absolute right-[2px] top-[52px] size-[22px]"><use href="#zoomapp"/></svg></div>
    <div class="relative w-[68px] h-[86px] flex items-center"><svg class="w-[68px] h-[54px]" viewBox="0 0 68 54"><rect width="68" height="54" fill="#262727"/><rect width="68" height="3" fill="#3a2d30"/><rect x="62" y="2" width="5" height="2" fill="#7a4bd0"/><rect x="61" y="5" width="6" height="2.500" fill="#7a60a8"/><path d="M20.500 4v50M21 28h47" stroke="#3b3c3c"/><path d="M3 12h14M24 11h8M26 13.500h10" stroke="#5f6040" stroke-width="1"/><rect x="21" y="28.500" width="5" height="2" fill="#8bc53c"/><path d="M28 29.500h8M24 36h6" stroke="#4d6c3c"/></svg><svg class="absolute right-[2px] top-[52px] size-[22px]"><use href="#insomnia"/></svg></div>
    <div class="relative w-[68px] h-[86px] flex items-center"><svg class="w-[68px] h-[63px]" viewBox="0 0 68 63"><rect width="68" height="63" fill="#fcfcfd"/><rect width="68" height="7" fill="#22262c"/><rect y="7" width="16" height="56" fill="#eef3f9"/><rect x="2" y="12" width="8" height="3" fill="#c2e3f5"/><path d="M3 18h8M4 21.500h4M4 25h5M4 28h3M19 10h10M21 13h30M21 16h20" stroke="#9aa5b4" stroke-width="1"/><circle cx="19" cy="20" r="1.500" fill="#3b6fe0"/><path d="M22 20h14" stroke="#8a96a8" stroke-width="1.200"/><path d="M21 25.500h27M21 28h28M21 30.500h28" stroke="#aebfe4" stroke-width="2"/><path d="M21 36h6M29 36h5" stroke="#ccd0d6" stroke-width="1.500"/><path d="M66 12v10" stroke="#e0b080" stroke-width="1"/></svg><svg class="absolute right-[2px] top-[52px] size-[22px]"><use href="#chrome"/></svg></div>
    <div class="relative w-[68px] h-[86px] flex items-center"><svg class="w-[68px] h-[41px]" viewBox="0 0 68 41"><rect width="68" height="41" fill="#3a3b3c"/><rect width="68" height="8" fill="#24282c"/><path d="M3 2.500h30M3 6h18M54 6h12" stroke="#565b60" stroke-width="1"/><rect x="14" y="8" width="40" height="33" fill="#fefefe"/><path d="M20 14h10M19 18h12M19 20h8M19 23h6M21 25.500h24M21 27.500h16" stroke="#b0b0b0" stroke-width=".8"/><rect x="27" y="37" width="14" height="3" fill="#333"/></svg><svg class="absolute right-[2px] top-[52px] size-[22px]"><use href="#chrome"/></svg></div>
    <div class="relative w-[68px] h-[86px] flex items-center justify-center"><svg class="w-[58px] h-[68px]" viewBox="0 0 58 68"><rect width="58" height="68" fill="#fdfdfd"/><rect width="58" height="8" fill="#3a3e43"/><rect y="8" width="58" height="4" fill="#060606"/><path d="M25 10h8" stroke="#eee" stroke-width="1"/><path d="M22 17.500h14" stroke="#222" stroke-width="1.600"/><path d="M26 20h7M13 24h5M40 24h4" stroke="#aaa" stroke-width=".8"/><g fill="#ececec"><path d="M3 27h16v16H3zM21 27h16v16H21zM39 27h16v16H39zM3 49h16v16H3zM21 49h16v16H21z"/></g><g fill="#222"><path d="M9 28h4v14H9zM27 28h4v14h-4zM45 28h4v14h-4zM9 50h4v14H9zM27 50h4v14h-4z" opacity=".6"/></g><g stroke-width="1.500"><circle cx="11" cy="35" r="4.500" fill="#35506c" stroke="#2a4560"/><circle cx="29" cy="35" r="4.500" fill="#ddd" stroke="#222"/><circle cx="47" cy="35" r="4.500" fill="#eee" stroke="#777"/><circle cx="11" cy="57" r="4.500" fill="#ccc" stroke="#222"/><circle cx="29" cy="57" r="4.500" fill="#20324c" stroke="#777"/></g><rect x="23" y="65" width="12" height="3" fill="#d84848"/><rect x="2" y="64" width="3" height="2" fill="#e83a3a"/></svg><svg class="absolute right-[2px] top-[52px] size-[22px]"><use href="#chrome"/></svg></div>
    <div class="relative w-[68px] h-[86px] flex items-center"><svg class="w-[68px] h-[47px]" viewBox="0 0 68 47"><rect width="68" height="47" fill="#22272e"/><rect width="68" height="9" fill="#2c333b"/><rect y="10" width="16" height="2" fill="#c4d4ea"/><rect x="16" y="13.500" width="4" height="3" fill="#2a62d8"/><path d="M20 14.500h48" stroke="#5a1c20" stroke-width="1.800"/><path d="M26 17.500h24" stroke="#2f5438" stroke-width="1.600"/><path d="M3 4h12M20 4h10M32 4h8M28 11h14" stroke="#5a646e" stroke-width="1"/><rect y="44" width="15" height="2.500" fill="#2f6fd0"/></svg><svg class="absolute right-[2px] top-[52px] size-[22px]"><use href="#ghapp"/></svg></div>
    <div class="relative w-[68px] h-[86px] flex items-center"><svg class="w-[68px] h-[57px]" viewBox="0 0 68 57"><rect width="68" height="57" fill="#1b1b1c"/><rect width="68" height="3" fill="#2a2a2b"/><path d="M2 5v48" stroke="#303236" stroke-width="2"/><path d="M7 5v50M9 8v44M12 34v20" stroke="#4e4e50" stroke-width="1.500" stroke-dasharray="1 1.500"/><path d="M22 8h14M24 12h9M26 15h16M26 18h12M30 22h15M30 26h8M24 30h12M22 36h18M22 40h12M22 44h20M46 8h8" stroke="#4f4a3a" stroke-width="1"/><path d="M0 56h68" stroke="#2b5f9e" stroke-width="1"/></svg><svg class="absolute right-[2px] top-[52px] size-[22px]"><use href="#vscode"/></svg></div>
  </div>
  <svg class="w-[52px] h-[68px] ml-[15px] mt-[7px]" viewBox="0 0 52 68"><path d="M3 14 7 4 14 6 18 1 24 6 31 2 35 6 42 3 48 12 44 18H8Z" fill="#e6e6e4"/><path d="M10 8 16 14M20 4 18 14M30 6 36 12M40 6 36 14" stroke="#77797b" stroke-width="1.600"/><path d="M18 9h6v5h-6z" fill="#7cc8c0"/><path d="M32 8l6-2 2 5-5 4z" fill="#48586c"/><path d="M.5 9 4 13Q26 19 48 13L51.500 9 46 61Q44 67 26 67T6 61Z" fill="url(#gTrash)"/><path d="M6.500 58Q26 66 45.500 58" fill="none" stroke="#a9adb0" stroke-width="1.500"/></svg>
</div>
</body>
</html>
